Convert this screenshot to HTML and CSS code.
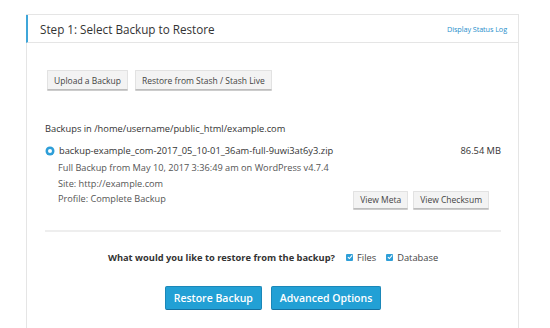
FILE: index.html
```html
<!DOCTYPE html>
<html>
<head>
<meta charset="utf-8">
<link rel="stylesheet" href="styles.css">
</head>
<body>
<div class="panel">
  <div class="panel-head">
    <h2 class="title">Step 1: Select Backup to Restore</h2>
    <a class="status-link">Display Status Log</a>
  </div>
  <div class="panel-body">
    <div class="top-buttons">
      <button class="btn">Upload a Backup</button>
      <button class="btn">Restore from Stash / Stash Live</button>
    </div>
    <div class="backups-label">Backups in /home/username/public_html/example.com</div>
    <div class="backup">
      <div class="backup-row">
        <span class="radio"></span>
        <span class="fname">backup-example_com-2017_05_10-01_36am-full-9uwi3at6y3.zip</span>
        <span class="size">86.54 MB</span>
      </div>
      <div class="meta">
        <div class="meta-text">
          <div>Full Backup from May 10, 2017 3:36:49 am on WordPress v4.7.4</div>
          <div>Site: http://example.com</div>
          <div>Profile: Complete Backup</div>
        </div>
        <div class="meta-buttons">
          <button class="btn">View Meta</button>
          <button class="btn">View Checksum</button>
        </div>
      </div>
    </div>
    <div class="divider"></div>
    <div class="question">
      <span class="q-text">What would you like to restore from the backup?</span>
      <label class="check"><span class="cbox"><svg viewBox="0 0 8 8" width="6" height="6"><path d="M1.2 4.2 L3.2 6 L6.8 1.8" fill="none" stroke="#fff" stroke-width="1.4"/></svg></span>Files</label>
      <label class="check"><span class="cbox"><svg viewBox="0 0 8 8" width="6" height="6"><path d="M1.2 4.2 L3.2 6 L6.8 1.8" fill="none" stroke="#fff" stroke-width="1.4"/></svg></span>Database</label>
    </div>
    <div class="actions">
      <button class="btn-primary">Restore Backup</button>
      <button class="btn-primary">Advanced Options</button>
    </div>
  </div>
</div>
</body>
</html>
```
FILE: styles.css
```css
html, body {
  margin: 0;
  padding: 0;
  background: #fff;
  font-family: "Open Sans", "Noto Sans", sans-serif;
  color: #444;
}
.panel {
  margin: 14px 31px 0 26px;
  border-top: 1px solid #e5e5e5;
  border-right: 1px solid #e5e5e5;
  border-left: 1px solid #e5e5e5;
  height: 320px;
  box-sizing: border-box;
}
.panel-head {
  display: flex;
  align-items: center;
  justify-content: space-between;
  height: 27px;
  border-left: 2px solid #3fa6d9;
  margin-left: -1px;
  border-bottom: 1px solid #e5e5e5;
  padding: 0 11px 0 12px;
}
.title {
  margin: 0;
  font-size: 11.7px;
  font-weight: 400;
  color: #333;
}
.status-link {
  font-size: 7.3px;
  color: #2a8fcc;
  letter-spacing: -0.1px;
}
.panel-body {
  padding: 27px 17px 0 18px;
}
.top-buttons {
  display: flex;
  gap: 7px;
  padding-left: 2px;
}
.btn {
  font-family: "Open Sans", "Noto Sans", sans-serif;
  font-size: 8.5px;
  color: #444;
  background: #f3f3f3;
  border: 1px solid #e2e2e2;
  border-bottom: 1px solid #bdbdbd;
  border-radius: 1px;
  height: 20px;
  padding: 0 6px;
  box-shadow: 0 1px 0 #ccc;
}
.backups-label {
  margin-top: 32px;
  font-size: 9.3px;
  color: #333;
}
.backup {
  margin-top: 9px;
  padding-left: 1px;
}
.backup-row {
  display: flex;
  align-items: center;
  font-size: 9.3px;
  color: #333;
}
.radio {
  width: 4px;
  height: 4px;
  border: 2px solid #2f9fd8;
  border-radius: 50%;
  background: #fff;
  margin-right: 5px;
  box-shadow: 0 0 0 0.5px #2f9fd8;
}
.fname {
  flex: 1;
}
.meta {
  display: flex;
  justify-content: space-between;
  align-items: flex-end;
  padding-left: 12px;
  margin-top: 3px;
}
.meta-text {
  font-size: 9.2px;
  line-height: 15.5px;
  color: #555;
}
.meta-buttons {
  display: flex;
  gap: 5px;
  padding-right: 12px;
  margin-bottom: -2px;
}
.meta-buttons .btn {
  height: 18px;
  padding: 0 6px;
}
.divider {
  margin-top: 23px;
  height: 2px;
  background: #eee;
}
.question {
  display: flex;
  justify-content: center;
  align-items: center;
  margin-top: 19px;
  font-size: 9.3px;
  gap: 10px;
  padding-left: 0;
}
.q-text {
  font-weight: 700;
  color: #333;
  margin-right: 1px;
}
.check {
  display: flex;
  align-items: center;
  gap: 4px;
  color: #444;
}
.cbox {
  width: 7px;
  height: 7px;
  background: #2f9fd8;
  border-radius: 1px;
  display: flex;
  align-items: center;
  justify-content: center;
}
.actions {
  display: flex;
  justify-content: center;
  gap: 9px;
  margin-top: 22px;
  padding-left: 0;
}
.btn-primary {
  font-family: "Open Sans", "Noto Sans", sans-serif;
  font-size: 10.5px;
  font-weight: 600;
  color: #fff;
  background: #22a0d5;
  border: 1px solid #1b87b8;
  border-bottom-color: #1570a0;
  border-radius: 2px;
  height: 24px;
  padding: 0 8px;
}
```
